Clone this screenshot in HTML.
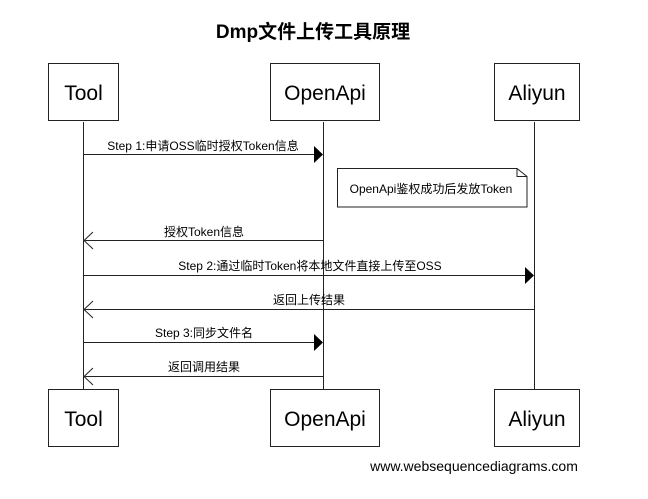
<!DOCTYPE html>
<html><head><meta charset="utf-8"><style>
body{margin:0;background:#fff}
text{font-family:"Liberation Sans","Noto Sans CJK SC",sans-serif;fill:#000}
</style></head><body>
<svg width="648" height="494" xmlns="http://www.w3.org/2000/svg">
<text x="313" y="38" font-size="19" font-weight="bold" text-anchor="middle">Dmp文件上传工具原理</text>
<g stroke="#222" stroke-width="1" fill="none">
<line x1="83.5" y1="122" x2="83.5" y2="390"/>
<line x1="323.5" y1="122" x2="323.5" y2="390"/>
<line x1="534.5" y1="122" x2="534.5" y2="390"/>
<rect x="48.5" y="63.5" width="70" height="57" fill="#fff"/>
<rect x="270.5" y="63.5" width="109" height="57" fill="#fff"/>
<rect x="494.5" y="63.5" width="85" height="57" fill="#fff"/>
<rect x="48.5" y="389.5" width="70" height="57" fill="#fff"/>
<rect x="270.5" y="389.5" width="109" height="57" fill="#fff"/>
<rect x="494.5" y="389.5" width="85" height="57" fill="#fff"/>
<path d="M337.5 168.5H517l10 8v30.5H337.5Z" fill="#fff"/>
<path d="M517 168.5v8h10"/>
<line x1="83.5" y1="154.5" x2="314" y2="154.5"/>
<line x1="85" y1="240.5" x2="323.5" y2="240.5"/>
<path d="M93 232L84 240.5L93 249"/>
<line x1="83.5" y1="275.5" x2="525" y2="275.5"/>
<line x1="85" y1="309.5" x2="534.5" y2="309.5"/>
<path d="M93 301L84 309.5L93 318"/>
<line x1="83.5" y1="342.5" x2="314" y2="342.5"/>
<line x1="85" y1="376.5" x2="323.5" y2="376.5"/>
<path d="M93 368L84 376.5L93 385"/>
</g>
<path d="M314 146L323 154.5L314 163Z"/>
<path d="M525 267L534 275.5L525 284Z"/>
<path d="M314 334L323 342.5L314 351Z"/>
<g font-size="21" text-anchor="middle">
<text x="83.5" y="100">Tool</text><text x="325" y="100">OpenApi</text><text x="537" y="100">Aliyun</text>
<text x="83.5" y="426">Tool</text><text x="325" y="426">OpenApi</text><text x="537" y="426">Aliyun</text>
</g>
<g font-size="12" text-anchor="middle">
<text x="203" y="150">Step 1:申请OSS临时授权Token信息</text>
<text x="431" y="193">OpenApi鉴权成功后发放Token</text>
<text x="204" y="236">授权Token信息</text>
<text x="310" y="270">Step 2:通过临时Token将本地文件直接上传至OSS</text>
<text x="309" y="304">返回上传结果</text>
<text x="204" y="337">Step 3:同步文件名</text>
<text x="204" y="371">返回调用结果</text>
</g>
<text x="474" y="471" font-size="14" text-anchor="middle">www.websequencediagrams.com</text>
</svg>
</body></html>
